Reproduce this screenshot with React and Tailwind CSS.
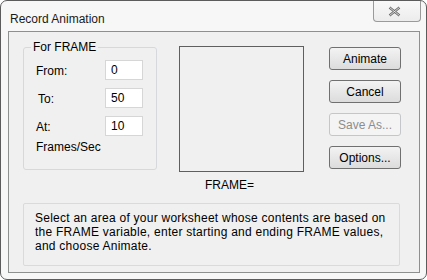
import React from 'react';

const font = { fontFamily: '"Liberation Sans", Arial, sans-serif' };

const Field = ({ label, value, className = '' }) => (
  <div className="flex items-center h-[20px]">
    <span className={`w-[69px] pt-[2px] ${className}`}>{label}</span>
    <input
      readOnly
      value={value}
      className="w-[38px] h-[20px] border border-[#d6d6d6] bg-white px-[5px] text-[12px] text-black outline-none"
    />
  </div>
);

const DlgButton = ({ children, disabled }) => (
  <button
    className={`w-[72px] h-[23px] rounded-[3px] border text-[12px] leading-none ${
      disabled
        ? 'border-[#c4c7c9] bg-[#f4f4f4] text-[#8d8d8d]'
        : 'border-[#707070] bg-gradient-to-b from-[#f3f3f3] to-[#dcdcdc] text-black'
    }`}
  >
    {children}
  </button>
);

const App = () => {
  return (
    <div className="w-[427px] h-[280px] bg-white" style={font}>
      <div className="w-[427px] h-[280px] rounded-[7px] border border-[#5c5c5c] bg-[#f7f7f7] flex flex-col text-[12px] text-black">
        {/* Title bar */}
        <div className="h-[30px] flex items-start justify-between">
          <span className="pl-[9px] pt-[9px] text-[12px] text-[#1a1a1a]">Record Animation</span>
          <div className="mr-[5px] w-[48px] h-[21px] rounded-b-[4px] border border-t-0 border-[#9a9a9a] bg-gradient-to-b from-[#f9f9f9] to-[#ececec] flex items-center justify-center">
            <svg width="13" height="11" viewBox="0 0 13 11" className="-ml-[6px]">
              <path d="M1.5 1.5 L11.5 9.5 M11.5 1.5 L1.5 9.5" stroke="#6a6a6a" strokeWidth="2.4" fill="none" />
              <path d="M1.5 1.5 L11.5 9.5 M11.5 1.5 L1.5 9.5" stroke="#f4f4f4" strokeWidth="0.8" fill="none" />
            </svg>
          </div>
        </div>

        {/* Client area */}
        <div className="ml-[7px] mr-[6px] h-[242px] border border-[#8e8f8f] bg-[#f0f0f0] pl-[14px] pt-[14px]">
          <div className="flex h-[157px]">
            {/* Group box */}
            <div className="relative mt-[1px] w-[134px] h-[123px] rounded-[3px] border border-[#d5d9dc] pl-[12px] pt-[12px]">
              <span className="absolute -top-[8px] left-[7px] bg-[#f0f0f0] px-[2px] leading-[14px]">For FRAME</span>
              <div className="flex flex-col gap-[8px]">
                <Field label="From:" value="0" />
                <Field label="To:" value="50" className="pl-[2px]" />
                <Field label="At:" value="10" />
              </div>
              <div className="mt-[4px] leading-[14px]">Frames/Sec</div>
            </div>

            {/* Preview */}
            <div className="ml-[22px] flex flex-col">
              <div className="w-[125px] h-[126px] border border-[#5f5f5f]" />
              <span className="mt-[6px] ml-[26px] leading-[14px]">FRAME=</span>
            </div>

            {/* Buttons */}
            <div className="ml-[25px] mt-[1px] flex flex-col gap-[10px]">
              <DlgButton>Animate</DlgButton>
              <DlgButton>Cancel</DlgButton>
              <DlgButton disabled>Save As...</DlgButton>
              <DlgButton>Options...</DlgButton>
            </div>
          </div>

          {/* Description */}
          <div className="w-[377px] h-[63px] rounded-[2px] border border-[#dadada] px-[11px] pt-[7px] leading-[14px] tracking-[0.25px]">
            Select an area of your worksheet whose contents are based on the FRAME variable, enter starting and ending FRAME values, and choose Animate.
          </div>
        </div>
      </div>
    </div>
  );
};

export default App;
